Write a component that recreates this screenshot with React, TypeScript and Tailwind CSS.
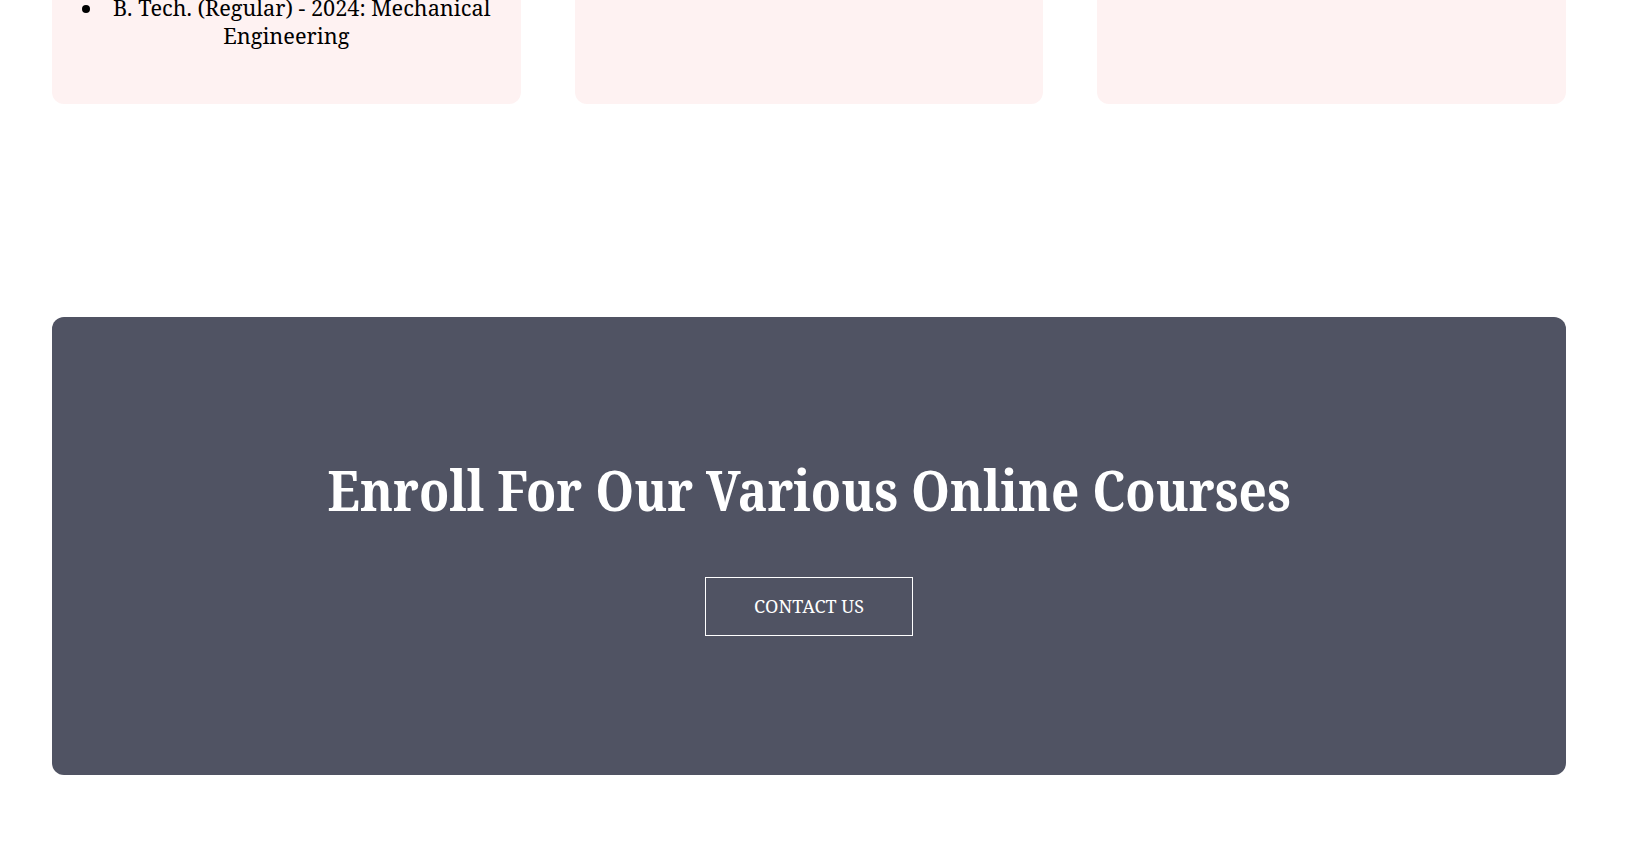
export default function App() {
  const serif = { fontFamily: '"Noto Serif", "DejaVu Serif", "Liberation Serif", serif' };
  return (
    <div className="w-full overflow-hidden bg-white" style={serif}>
      <div className="pl-[52px] w-[1566px]">
        <div className="grid grid-cols-3 gap-[54px] -mt-[142px]">
          <div className="bg-[#fef2f2] rounded-xl px-6 pb-[54px] pt-6 text-center text-black">
            <ul className="list-disc list-inside text-[21.7px] leading-[28px]">
              <li className="mb-0">B. Tech. (Regular) - 2023: Computer Science and Engineering</li>
              <li>B. Tech. (Regular) - 2024: Civil Engineering</li>
              <li>B. Tech. (Regular) - 2024: Mechanical Engineering</li>
            </ul>
          </div>
          <div className="bg-[#fef2f2] rounded-xl"></div>
          <div className="bg-[#fef2f2] rounded-xl"></div>
        </div>

        <div className="mt-[213px] mb-[70px] bg-[#505363] rounded-xl py-[139px] flex flex-col items-center">
          <h2 className="text-white font-bold text-[56px] leading-[67px] whitespace-nowrap scale-x-[0.885]">
            Enroll For Our Various Online Courses
          </h2>
          <a href="#" className="mt-[54px] border border-white text-white text-[18px] leading-[27px] px-12 py-[15px] uppercase">
            Contact Us
          </a>
        </div>
      </div>
    </div>
  );
}
